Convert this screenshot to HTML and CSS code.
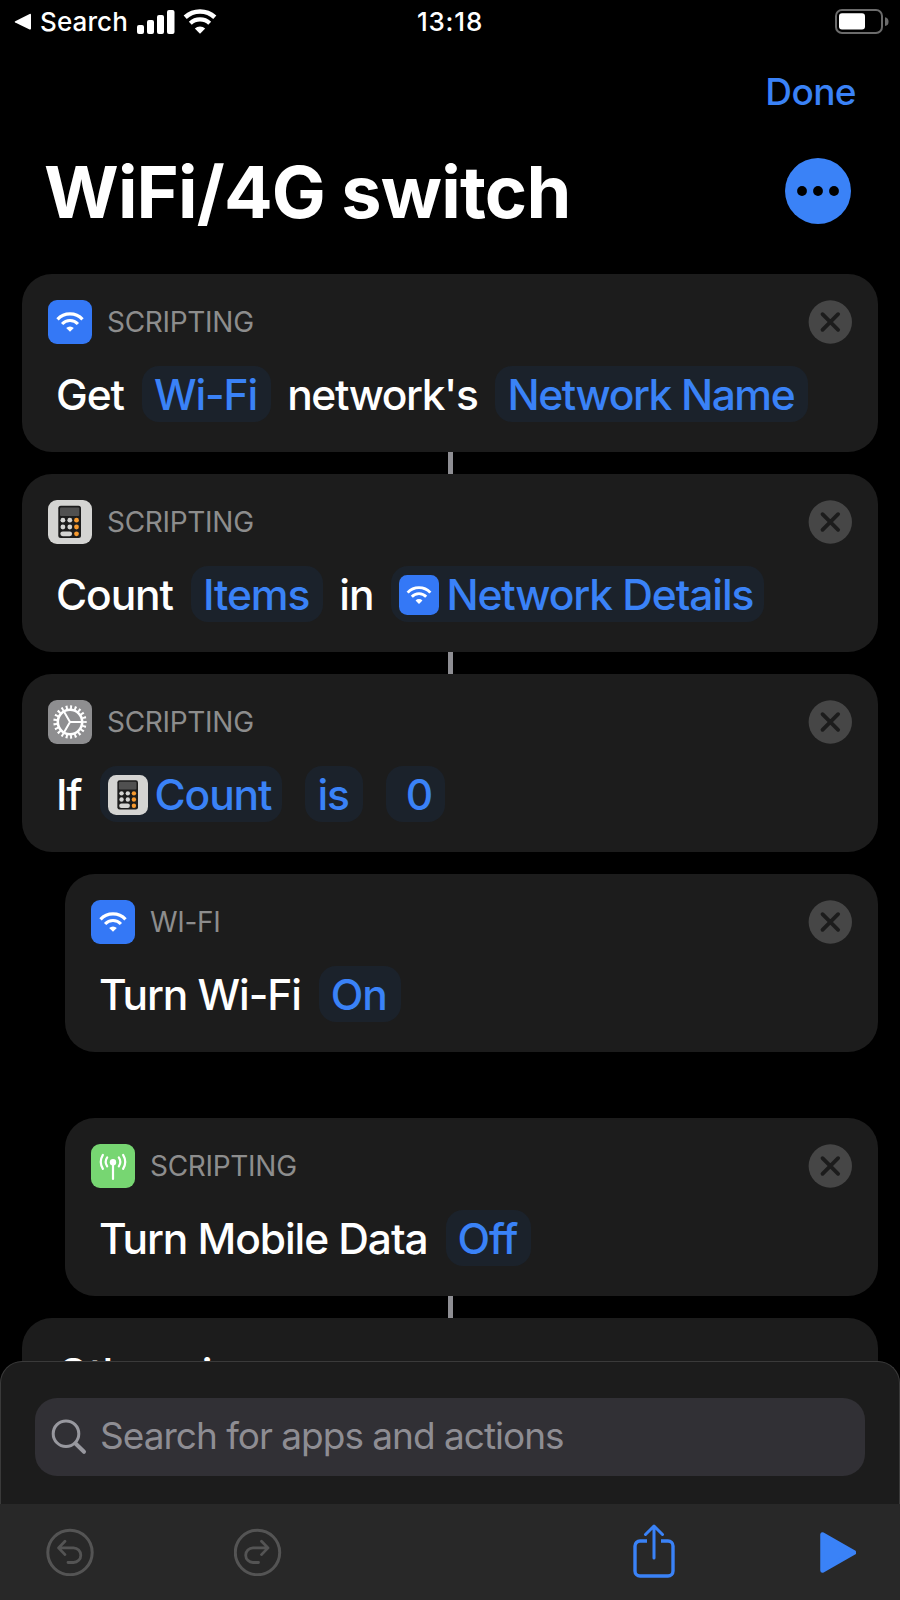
FILE: index.html
```html
<!DOCTYPE html>
<html lang="en">
<head>
    <meta charset="UTF-8">
    <title>WiFi/4G switch</title>
    <link rel="stylesheet" href="styles.css">
</head>
<body>
    <!-- Shared icons -->
    <svg class="sprite" width="0" height="0">
        <symbol id="icon-wifi" viewBox="0 0 44 44">
            <rect width="44" height="44" rx="9" fill="#3478f6"/>
            <g fill="none" stroke="#fff">
                <path d="M9.5 19.4a17 17 0 0 1 25 0" stroke-width="3.2"/>
                <path d="M14.1 24a10.7 10.7 0 0 1 15.8 0" stroke-width="3.1"/>
            </g>
            <path d="M22 31.8l-3.8-3.7a5.3 5.3 0 0 1 7.6 0z" fill="#fff"/>
        </symbol>
        <symbol id="icon-calc" viewBox="0 0 44 44">
            <rect width="44" height="44" rx="9" fill="#d4d4d2"/>
            <rect x="10.3" y="5.7" width="22.7" height="32.3" rx="2.5" fill="#1c1c1c"/>
            <rect x="12" y="7.5" width="19.3" height="8.4" rx="1" fill="#505050"/>
            <g fill="#d4d4d2">
                <circle cx="14.9" cy="20.2" r="2.4"/>
                <circle cx="21.8" cy="20.2" r="2.4"/>
                <circle cx="14.9" cy="27" r="2.4"/>
                <circle cx="21.8" cy="27" r="2.4"/>
                <rect x="12.3" y="31.4" width="11.8" height="4.8" rx="2.4"/>
            </g>
            <g fill="#f79a2f">
                <circle cx="28.5" cy="20.2" r="2.4"/>
                <circle cx="28.5" cy="27" r="2.4"/>
                <circle cx="28.5" cy="33.8" r="2.4"/>
            </g>
        </symbol>
        <symbol id="icon-gear" viewBox="0 0 44 44">
            <rect width="44" height="44" rx="9" fill="#8e8e90"/>
            <g fill="none" stroke="#fff">
                <circle cx="22" cy="22" r="12.2" stroke-width="2.6"/>
                <circle cx="22" cy="22" r="14.8" stroke-width="3.8" pathLength="84" stroke-dasharray="1.8 2.2" stroke-dashoffset="0.9"/>
                <path d="M22 22h12.4M22 22l-6.2-10.7M22 22l-6.2 10.7" stroke-width="2"/>
            </g>
        </symbol>
        <symbol id="icon-antenna" viewBox="0 0 44 44">
            <rect width="44" height="44" rx="9" fill="#77d672"/>
            <circle cx="22" cy="18.3" r="3.2" fill="#fff"/>
            <g fill="none" stroke="#fff" stroke-width="2.2" stroke-linecap="round">
                <path d="M22 19v16"/>
                <path d="M16.2 13.3a8 8 0 0 0 0 9M27.8 13.3a8 8 0 0 1 0 9"/>
                <path d="M11.9 10.9a13.5 13.5 0 0 0 0 14M32.1 10.9a13.5 13.5 0 0 1 0 14"/>
            </g>
        </symbol>
        <symbol id="icon-close" viewBox="0 0 44 44">
            <circle cx="22.3" cy="22" r="21.7" fill="#464646"/>
            <path d="M14.5 14.2l15.6 15.6M30.1 14.2l-15.6 15.6" stroke="#1c1c1c" stroke-width="3.8" stroke-linecap="round"/>
        </symbol>
    </svg>

    <div class="screen">
        <div class="status-bar">
            <div class="status-left">
                <svg class="back-arrow" viewBox="0 0 18 18"><path d="M1.2 8.2L15.6.9Q17 .3 17 1.8V15.5Q17 17 15.6 16.4L1.2 9.5Q0 8.9 1.2 8.2z" fill="#fff"/></svg>
                <span class="back-label">Search</span>
                <svg class="signal" viewBox="0 0 38 24" fill="#fff">
                    <rect x="0" y="15" width="7" height="9" rx="2"/>
                    <rect x="10" y="10" width="7" height="14" rx="2"/>
                    <rect x="20" y="5" width="7" height="19" rx="2"/>
                    <rect x="30" y="0" width="7.5" height="24" rx="2"/>
                </svg>
                <svg class="status-wifi" viewBox="0 0 34 25">
                    <g fill="none" stroke="#fff">
                        <path d="M2.2 8.2a22 22 0 0 1 29.6 0" stroke-width="4.6"/>
                        <path d="M7.3 14.3a14 14 0 0 1 19.4 0" stroke-width="4.2"/>
                    </g>
                    <path d="M17 24.8l-5.2-5.2a7.7 7.7 0 0 1 10.4 0z" fill="#fff"/>
                </svg>
            </div>
            <div class="clock">13:18</div>
            <div class="status-right">
                <svg class="battery" viewBox="0 0 54 26">
                    <rect x="1" y="1" width="46" height="23" rx="6" fill="none" stroke="#6b6b6b" stroke-width="2"/>
                    <rect x="4" y="4.3" width="26" height="16.2" rx="3" fill="#fff"/>
                    <path d="M50 8.3a4.5 4.5 0 0 1 0 8.8z" fill="#6b6b6b"/>
                </svg>
            </div>
        </div>

        <div class="nav">
            <a class="done">Done</a>
        </div>

        <div class="title-row">
            <h1>WiFi/4G switch</h1>
            <svg class="more" viewBox="0 0 66 66">
                <circle cx="33" cy="33" r="33" fill="#3a82f7"/>
                <circle cx="17" cy="33" r="4.9"/>
                <circle cx="33" cy="33" r="4.9"/>
                <circle cx="49" cy="33" r="4.9"/>
            </svg>
        </div>

        <div class="actions">
            <div class="card">
                <div class="card-head">
                    <svg class="app-icon"><use href="#icon-wifi"/></svg>
                    <span class="category">SCRIPTING</span>
                    <svg class="close"><use href="#icon-close"/></svg>
                </div>
                <div class="sentence">
                    <span class="word">Get</span>
                    <span class="chip">Wi-Fi</span>
                    <span class="word tight">network's</span>
                    <span class="chip tight">Network Name</span>
                </div>
            </div>
            <div class="connector"></div>

            <div class="card">
                <div class="card-head">
                    <svg class="app-icon"><use href="#icon-calc"/></svg>
                    <span class="category">SCRIPTING</span>
                    <svg class="close"><use href="#icon-close"/></svg>
                </div>
                <div class="sentence">
                    <span class="word">Count</span>
                    <span class="chip">Items</span>
                    <span class="word">in</span>
                    <span class="chip variable"><svg class="chip-icon"><use href="#icon-wifi"/></svg>Network Details</span>
                </div>
            </div>
            <div class="connector"></div>

            <div class="card">
                <div class="card-head">
                    <svg class="app-icon"><use href="#icon-gear"/></svg>
                    <span class="category">SCRIPTING</span>
                    <svg class="close"><use href="#icon-close"/></svg>
                </div>
                <div class="sentence">
                    <span class="word">If</span>
                    <span class="chip variable"><svg class="chip-icon"><use href="#icon-calc"/></svg>Count</span>
                    <span class="chip">is</span>
                    <span class="chip number">0</span>
                </div>
            </div>

            <div class="card nested">
                <div class="card-head">
                    <svg class="app-icon"><use href="#icon-wifi"/></svg>
                    <span class="category">WI-FI</span>
                    <svg class="close"><use href="#icon-close"/></svg>
                </div>
                <div class="sentence">
                    <span class="word">Turn Wi-Fi</span>
                    <span class="chip">On</span>
                </div>
            </div>

            <div class="card nested spaced">
                <div class="card-head">
                    <svg class="app-icon"><use href="#icon-antenna"/></svg>
                    <span class="category">SCRIPTING</span>
                    <svg class="close"><use href="#icon-close"/></svg>
                </div>
                <div class="sentence">
                    <span class="word">Turn Mobile Data</span>
                    <span class="chip">Off</span>
                </div>
            </div>
            <div class="connector"></div>

            <div class="card otherwise">
                <span>Otherwise</span>
            </div>
        </div>

        <!-- Bottom sheet, drawn over the action list -->
        <div class="bottom">
            <div class="sheet">
                <div class="search">
                    <svg class="search-icon" viewBox="0 0 36 36" fill="none" stroke="#98989f" stroke-linecap="round">
                        <circle cx="15" cy="14.7" r="12.8" stroke-width="3"/>
                        <path d="M24.5 24.5l8.5 8.3" stroke-width="4"/>
                    </svg>
                    <span>Search for apps and actions</span>
                </div>
            </div>
            <div class="toolbar">
                <svg class="tool undo" viewBox="0 0 48 48" fill="none" stroke="#545454" stroke-width="2.8" stroke-linecap="round" stroke-linejoin="round">
                    <circle cx="24" cy="24.5" r="22.2" stroke-width="3"/>
                    <path d="M19 13.2l-6.5 6.7 6.5 6.7M13 19.9h14.5a7.3 7.3 0 0 1 0 14.6h-5.500"/>
                </svg>
                <svg class="tool redo" viewBox="0 0 48 48" fill="none" stroke="#545454" stroke-width="2.8" stroke-linecap="round" stroke-linejoin="round">
                    <circle cx="23.500" cy="24.5" r="22.2" stroke-width="3"/>
                    <path d="M27.500 13.2l6.5 6.7-6.5 6.7M33.500 19.9h-14.500a7.3 7.3 0 0 0 0 14.6h5.500"/>
                </svg>
                <svg class="share" viewBox="0 0 42 54" fill="none" stroke="#3a82f7" stroke-width="3.4" stroke-linejoin="round">
                    <path d="M14 17H7a5 5 0 0 0-5 5V47a5 5 0 0 0 5 5h28a5 5 0 0 0 5-5V22a5 5 0 0 0-5-5h-7"/>
                    <path d="M21 34V2.5M12.5 10.5L21 2l8.500 8.500" stroke-width="3" stroke-linecap="round"/>
                </svg>
                <svg class="play" viewBox="0 0 36 41"><path d="M2.5 2.5v36L34 20.500z" fill="#3a82f7" stroke="#3a82f7" stroke-width="4.5" stroke-linejoin="round"/></svg>
            </div>
        </div>
    </div>
</body>
</html>
```
FILE: styles.css
```css
* { box-sizing: border-box; }
body { margin: 0; background: #000; color: #fff; font-family: Inter, "Liberation Sans", sans-serif; }
svg { display: block; flex: none; }
.sprite { position: absolute; }

.screen { position: relative; width: 900px; height: 1600px; overflow: hidden; background: #000; }

/* Status bar */
.status-bar { display: grid; grid-template-columns: 1fr auto 1fr; align-items: center; height: 43px; padding: 0 11px 0 14px; font-size: 26px; font-weight: 500; line-height: 43px; }
.status-left { display: flex; align-items: center; }
.back-arrow { width: 18px; height: 18px; }
.back-label { margin-left: 8px; letter-spacing: 0.1px; }
.signal { width: 38px; height: 24px; margin-left: 9px; }
.status-wifi { width: 34px; height: 25px; margin-left: 8px; }
.clock { padding-right: 3px; letter-spacing: 0.8px; }
.status-right { display: flex; justify-content: flex-end; }
.battery { width: 54px; height: 26px; }

/* Header */
.nav { display: flex; justify-content: flex-end; height: 98px; padding-right: 44px; }
.done { color: #3a82f7; font-size: 37px; font-weight: 500; line-height: 98px; letter-spacing: -0.6px; }
.title-row { display: flex; align-items: center; justify-content: space-between; height: 101px; padding: 0 49px 0 44px; }
h1 { margin: 0; font-size: 72px; font-weight: 700; line-height: 101px; letter-spacing: -0.8px; }
.more { width: 66px; height: 66px; margin-bottom: 1px; }

/* Action cards */
.actions { display: flex; flex-direction: column; padding: 32px 22px 0; }
.card { height: 178px; padding: 26px; border-radius: 30px; background: #1c1c1c; }
.card-head { display: flex; align-items: center; height: 44px; }
.app-icon, .close { width: 44px; height: 44px; }
.category { flex: 1; margin-left: 15px; color: #8d8d8d; font-size: 28px; line-height: 44px; letter-spacing: -0.3px; }
.sentence { display: flex; align-items: center; gap: 16px; height: 56px; margin-top: 22px; padding-left: 8px; font-size: 42.5px; font-weight: 500; line-height: 54px; letter-spacing: -1.1px; white-space: nowrap; }
.word { padding: 2px 2px 0 0; }
.tight { letter-spacing: -1.4px; }
.chip { display: flex; align-items: center; height: 56px; padding: 2px 14px 0 12px; border-radius: 17px; background: #1b222b; color: #3a82f7; }
.chip + .chip { margin-left: 7px; }
.chip.variable { padding-left: 8px; padding-right: 11px; }
.chip.number { padding-left: 20px; padding-right: 13px; }
.chip-icon { width: 40px; height: 40px; margin-right: 7px; }
.connector { align-self: center; width: 5px; height: 22px; background: #8e8e93; }
.nested { margin: 22px 0 0 43px; }
.nested.spaced { margin-top: 66px; }
.otherwise { padding: 28px 35px; font-size: 42.5px; font-weight: 500; line-height: 56px; letter-spacing: -0.8px; }

/* Bottom sheet and toolbar */
.bottom { position: absolute; left: 0; right: 0; bottom: 0; }
.sheet { height: 143px; padding: 36px 34px 0; border: 1px solid #3a3a3a; border-bottom: 0; border-radius: 22px 22px 0 0; background: #1c1c1c; }
.search { display: flex; align-items: center; height: 78px; padding-left: 16px; border-radius: 22px; background: #313035; color: #8e8d93; font-size: 37px; line-height: 76px; letter-spacing: -1px; }
.search-icon { width: 36px; height: 36px; }
.search span { height: 78px; margin-left: 13px; }
.toolbar { display: flex; align-items: center; height: 96px; padding: 0 44px 0 46px; background: #282828; }
.tool { width: 48px; height: 48px; }
.redo { margin-left: 140px; }
.share { width: 42px; height: 54px; margin: 0 0 2px auto; }
.play { width: 36px; height: 41px; margin-left: 145px; }
```
